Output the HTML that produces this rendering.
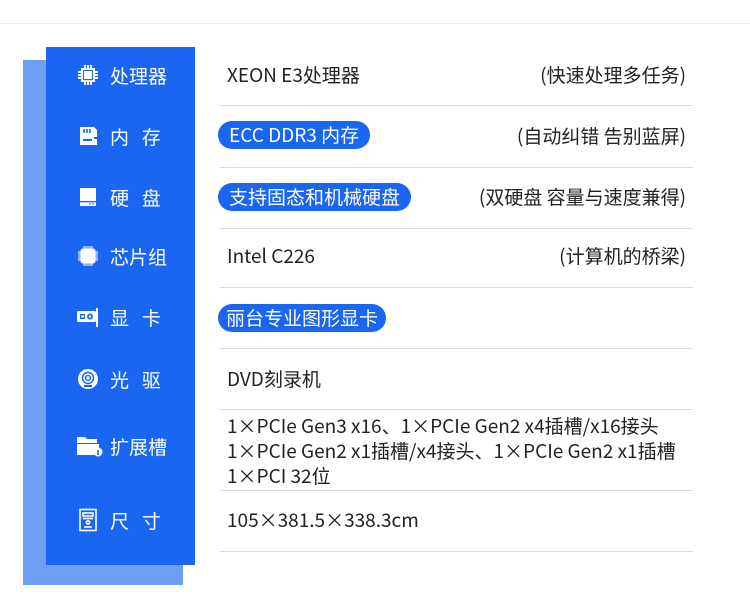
<!DOCTYPE html>
<html><head><meta charset="utf-8"><style>
*{margin:0;padding:0;box-sizing:border-box}
body{width:750px;height:608px;background:#fff;position:relative;overflow:hidden;font-family:"Noto Sans CJK SC","Liberation Sans",sans-serif;color:#222}
.top{position:absolute;left:0;right:0;top:23px;height:1px;background:#eee}
.light{position:absolute;left:23px;top:60px;width:160px;height:525px;background:#6d9ff5}
.blue{position:absolute;left:46px;top:47px;width:149px;height:518px;background:#1b66f0}
.lab{position:absolute;left:76px;height:24px;display:flex;align-items:center;color:#fff;font-size:19px;transform:translateY(-12px)}
.lab svg{width:24px;height:24px;margin-right:10px;flex:none}
.line{position:absolute;left:220px;width:473px;height:1px;background:#ddd}
.t{position:absolute;left:227px;font-size:19px;transform:translateY(-12px);line-height:24px;white-space:nowrap}
.r{position:absolute;right:64px;font-size:19px;transform:translateY(-12px);line-height:24px;white-space:nowrap}
.pill{position:absolute;left:218px;height:28px;border-radius:14px;background:#1b66f0;color:#fff;font-size:19px;line-height:28px;padding:0 11px;transform:translateY(-14px);white-space:nowrap}
</style></head><body>
<div class="top"></div>
<div class="light"></div>
<div class="blue"></div>

<div class="lab" style="top:75px"><svg viewBox="0 0 24 24" fill="none" stroke="#fff" stroke-width="2"><rect x="6" y="6" width="12" height="12"/><rect x="9" y="9" width="6" height="6" fill="#fff"/><path d="M9 2v4M12 2v4M15 2v4M9 18v4M12 18v4M15 18v4M2 9h4M2 12h4M2 15h4M18 9h4M18 12h4M18 15h4"/></svg>处理器</div>
<div class="lab" style="top:136px"><svg viewBox="0 0 24 24"><path d="M4 3h14l3 3v7h-3v2h3v6H4z" fill="#fff"/><path d="M8 5v4M11 5v4M14 5v4" stroke="#1b66f0" stroke-width="1.6"/><rect x="7" y="15" width="9" height="2" fill="#1b66f0"/></svg>内&nbsp;&nbsp;&nbsp;存</div>
<div class="lab" style="top:197px"><svg viewBox="0 0 24 24"><rect x="4" y="3" width="16" height="18" fill="#fff"/><rect x="4" y="16" width="16" height="1.3" fill="#1b66f0"/><circle cx="14" cy="18.7" r=".8" fill="#1b66f0"/><circle cx="17" cy="18.7" r=".8" fill="#1b66f0"/></svg>硬&nbsp;&nbsp;&nbsp;盘</div>
<div class="lab" style="top:256px"><svg viewBox="0 0 24 24" fill="#fff" stroke="#fff"><rect x="5" y="5" width="14" height="14" rx="2"/><path d="M8 2v3M10 2v3M12 2v3M14 2v3M16 2v3M8 19v3M10 19v3M12 19v3M14 19v3M16 19v3M2 8h3M2 10h3M2 12h3M2 14h3M2 16h3M19 8h3M19 10h3M19 12h3M19 14h3M19 16h3" stroke-width="1"/></svg>芯片组</div>
<div class="lab" style="top:317px"><svg viewBox="0 0 24 24"><rect x="1" y="6" width="19" height="11" rx="1.5" fill="#fff"/><rect x="20" y="3" width="2" height="19" fill="#fff"/><rect x="4" y="9" width="5" height="5" fill="#1b66f0"/><circle cx="14" cy="11.5" r="3" fill="#1b66f0"/><circle cx="14" cy="11.5" r="1.3" fill="#fff"/><rect x="5" y="10.5" width="3" height="2" fill="#fff"/></svg>显&nbsp;&nbsp;&nbsp;卡</div>
<div class="lab" style="top:379px"><svg viewBox="0 0 24 24"><circle cx="12" cy="12" r="10" fill="#fff"/><circle cx="12" cy="11" r="5.5" fill="none" stroke="#1b66f0" stroke-width="1.5"/><circle cx="12" cy="11" r="2.5" fill="none" stroke="#1b66f0" stroke-width="1.5"/><rect x="8" y="18" width="8" height="2" fill="#1b66f0"/></svg>光&nbsp;&nbsp;&nbsp;驱</div>
<div class="lab" style="top:446px"><svg viewBox="0 0 28 24" style="width:28px;margin-right:6px"><path d="M1 3h8l2 2h10v4H1zM1 10h22v4a6 6 0 0 0-4 7H1z" fill="#fff"/><circle cx="22" cy="18" r="4.5" fill="#fff"/><rect x="21.2" y="16" width="1.6" height="5" fill="#1b66f0"/></svg>扩展槽</div>
<div class="lab" style="top:520px"><svg viewBox="0 0 24 24" fill="none" stroke="#fff" stroke-width="1.6"><rect x="4" y="1.5" width="16" height="21"/><rect x="7" y="5" width="10" height="3"/><path d="M7 10.5h10"/><circle cx="12" cy="14.5" r="1.6"/><path d="M8 19h8"/></svg>尺&nbsp;&nbsp;&nbsp;寸</div>

<div class="line" style="top:105px"></div>
<div class="line" style="top:167px"></div>
<div class="line" style="top:228px"></div>
<div class="line" style="top:287px"></div>
<div class="line" style="top:348px"></div>
<div class="line" style="top:409px"></div>
<div class="line" style="top:490px"></div>
<div class="line" style="top:551px"></div>

<div class="t" style="top:75px">XEON E3处理器</div><div class="r" style="top:75px">(快速处理多任务)</div>
<div class="pill" style="top:135px">ECC DDR3 内存</div><div class="r" style="top:136px">(自动纠错 告别蓝屏)</div>
<div class="pill" style="top:197px">支持固态和机械硬盘</div><div class="r" style="top:197px">(双硬盘 容量与速度兼得)</div>
<div class="t" style="top:256px">Intel C226</div><div class="r" style="top:256px">(计算机的桥梁)</div>
<div class="pill" style="top:318px;padding:0 8px">丽台专业图形显卡</div>
<div class="t" style="top:379px">DVD刻录机</div>
<div class="t" style="top:413px;transform:none;line-height:25px">1×PCIe Gen3 x16、1×PCIe Gen2 x4插槽/x16接头<br>1×PCIe Gen2 x1插槽/x4接头、1×PCIe Gen2 x1插槽<br>1×PCI 32位</div>
<div class="t" style="top:520px">105×381.5×338.3cm</div>
</body></html>
